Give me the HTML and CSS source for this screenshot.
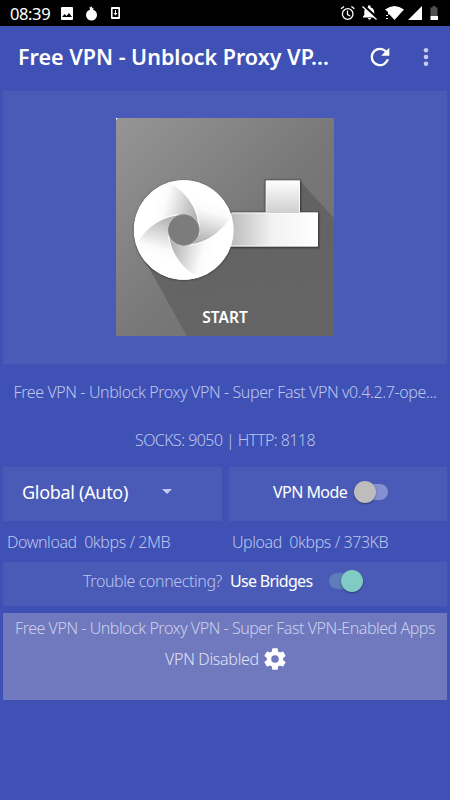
FILE: index.html
```html
<!DOCTYPE html>
<html lang="en">
<head>
<meta charset="utf-8">
<title>Free VPN</title>
<link rel="stylesheet" href="styles.css">
</head>
<body>
<header class="status">
  <span class="clock">08:39</span>
  <svg class="status-left" width="62" height="26" viewBox="59 0 62 26" fill="#fff">
    <path fill-rule="evenodd" d="M62 7h10q1 0 1 1v11q0 1-1 1H62q-1 0-1-1V8q0-1 1-1zm0 10h10l-3-4-2.500 3-1.800-2z"/>
    <circle cx="91.500" cy="15" r="5.500"/><path d="M90 11l-.5-4.500 1.500 1 .5-1.500 1 2.500 1-1-.5 4z"/>
    <path fill-rule="evenodd" d="M112 7h7q1 0 1 1v10q0 1-1 1h-7q-1 0-1-1V8q0-1 1-1zm.6 2v8h5.800V9z"/><path d="M115 10h1v3h1.500l-2 2.500-2-2.500h1.500z"/>
  </svg>
  <svg class="status-right" width="102" height="26" viewBox="339 0 102 26" fill="#fff">
    <g fill="none" stroke="#fff" stroke-width="1.300"><circle cx="347.700" cy="14" r="5.300"/><path d="M347.500 10.500v4l2.700 1.500M341 8.800l3-2.400M354.400 8.800l-3-2.400"/></g>
    <path d="M363 17.500v-1l1.300-1.500V11q.3-3 3.700-3.800V5.500h2.500v1.700q3 .8 3.700 3.800v4l1.500 1.500v1zM368 18h3q-.2 1.800-1.500 1.800T368 18z"/><path d="M363 5l14 13" stroke="#000" stroke-width="2.500"/><path d="M362.500 6.500l14 13" stroke="#fff" stroke-width="1.200"/>
    <path d="M385 9.500q9.500-7 19 0L394.500 20l-5-5.500h-1.500V12z"/><path d="M386 15h2v1h-2zm0 3h2v1h-2z"/>
    <path d="M422 6v14h-14z"/>
    <path fill="#505050" d="M432.500 6h3v1.500h2V16h-7V7.500h2z"/><path d="M430.500 16h7.500v4h-7.500z"/>
  </svg>
</header>
<div class="toolbar">
  <h1>Free VPN - Unblock Proxy VP...</h1>
  <svg class="refresh" width="28" height="28" viewBox="0 0 24 24"><path fill="#fff" d="M17.650 6.350A7.960 7.960 0 0 0 12 4a8 8 0 1 0 7.730 10h-2.080A6 6 0 1 1 12 6c1.660 0 3.140.69 4.220 1.780L13 11h7V4z"/></svg>
  <svg class="more" width="6" height="20" viewBox="0 0 6 20" fill="#c5caee"><circle cx="3" cy="3.300" r="2.300"/><circle cx="3" cy="10" r="2.300"/><circle cx="3" cy="16.700" r="2.300"/></svg>
</div>
<main>
  <section class="panel hero">
    <div class="start">
      <svg width="218" height="218" viewBox="0 0 218 218">
        <defs>
          <linearGradient id="bg" x2="1" y2="1"><stop stop-color="#959595"/><stop offset=".55" stop-color="#777"/><stop offset="1" stop-color="#707070"/></linearGradient>
          <linearGradient id="shade" x2=".7" y2="1"><stop offset=".3" stop-color="#505050" stop-opacity=".55"/><stop offset="1" stop-color="#555" stop-opacity=".45"/></linearGradient>
          <linearGradient id="bar"><stop stop-color="#b5b5b5"/><stop offset=".5" stop-color="#f2f2f2"/><stop offset="1" stop-color="#fff"/></linearGradient>
          <linearGradient id="block" x2="0" y2="1"><stop stop-color="#fff"/><stop offset="1" stop-color="#cecece"/></linearGradient>
          <linearGradient id="blade" gradientUnits="userSpaceOnUse" x1="30" y1="-28" x2="19" y2="13"><stop stop-color="#fff"/><stop offset=".25" stop-color="#fbfbfb"/><stop offset="1" stop-color="#b2b2b2"/></linearGradient>
          <filter id="soft" x="-20%" y="-20%" width="140%" height="140%"><feGaussianBlur stdDeviation="1.200"/></filter>
          <path id="petal" d="M-14-47.500A49.500 49.500 0 0 1 47.500-14C38 4 17 18-5 15A16 16 0 0 0 15 5C18-17 4-38-14-47.500Z"/>
        </defs>
        <rect width="218" height="218" fill="url(#bg)"/>
        <path d="M0 0h2L0 2z" fill="#fff"/>
        <path d="M29 143L71 218H218V100L184 63V94H202V128H110Q100 161 68 162Q43 162 29 143Z" fill="url(#shade)"/>
        <g fill="#333" filter="url(#soft)"><circle cx="67.700" cy="112.700" r="49.500"/><path d="M110 94h93v36h-93zM149 62h36v33h-36z"/></g>
        <path d="M110 94.500h92v34h-92z" fill="url(#bar)"/>
        <path d="M150 62.500h34v32h-34z" fill="url(#block)"/>
        <path d="M150 94.500V63h33.500v31.500M202 95H116M201.500 95v33H112" fill="none" stroke="#fff" stroke-opacity=".8"/>
        <g transform="translate(67.700 112)">
          <circle r="49.500" fill="#fff"/>
          <g fill="url(#blade)" stroke="#fff" stroke-width=".9"><use href="#petal"/><use href="#petal" transform="rotate(90)"/><use href="#petal" transform="rotate(180)"/><use href="#petal" transform="rotate(270)"/></g>
          <circle r="15.700" fill="#7c7c7c" stroke="#999" stroke-width=".6"/>
        </g>
      </svg>
      <span class="start-label">START</span>
    </div>
  </section>
  <p class="version"><span>Free VPN - Unblock Proxy VPN - Super Fast VPN v0.4.2.7-ope...</span></p>
  <p class="ports"><span>SOCKS: 9050 | HTTP: 8118</span></p>
  <div class="controls">
    <div class="panel country"><span class="global">Global (Auto)</span><i class="caret"></i></div>
    <div class="panel mode"><span class="vpnmode">VPN Mode</span><div class="switch off"><i></i></div></div>
  </div>
  <div class="traffic"><p><span class="down">Download&nbsp; 0kbps / 2MB</span></p><p><span class="up">Upload&nbsp; 0kbps / 373KB</span></p></div>
  <div class="panel bridges"><span class="trouble">Trouble connecting?</span><span class="use">Use Bridges</span><div class="switch on"><i></i></div></div>
  <section class="apps">
    <p><span class="apps-title">Free VPN - Unblock Proxy VPN - Super Fast VPN-Enabled Apps</span></p>
    <div class="disabled"><span class="vpndis">VPN Disabled</span>
      <svg width="26" height="26" viewBox="0 0 24 24"><path fill="#fff" d="M19.430 12.980c.04-.32.07-.64.07-.98s-.03-.66-.07-.98l2.110-1.650c.19-.15.24-.42.12-.64l-2-3.460c-.12-.22-.39-.3-.61-.22l-2.490 1c-.52-.4-1.080-.73-1.690-.98l-.38-2.650C14.460 2.180 14.250 2 14 2h-4c-.25 0-.46.18-.49.42l-.38 2.650c-.61.25-1.170.59-1.690.98l-2.490-1c-.23-.09-.49 0-.61.22l-2 3.460c-.13.22-.07.49.12.64l2.110 1.650c-.04.32-.07.65-.07.98s.03.66.07.98l-2.110 1.650c-.19.15-.24.42-.12.64l2 3.460c.12.22.39.3.61.22l2.490-1c.52.4 1.080.73 1.690.98l.38 2.650c.03.24.24.42.49.42h4c.25 0 .46-.18.49-.42l.38-2.650c.61-.25 1.170-.59 1.690-.98l2.490 1c.23.09.49 0 .61-.22l2-3.460c.12-.22.07-.49-.12-.64l-2.110-1.650zM12 15.500A3.500 3.500 0 1 1 12 8.500a3.500 3.500 0 0 1 0 7z"/></svg>
    </div>
  </section>
</main>
</body>
</html>
```
FILE: styles.css
```css
* { box-sizing: border-box; }
body { margin: 0; width: 450px; height: 800px; overflow: hidden; background: #3f51b5; color: #fff; font-family: "Noto Sans", sans-serif; font-size: 16px; font-weight: 300; }
p, h1 { margin: 0; white-space: nowrap; }
span { white-space: nowrap; }
.status { height: 26px; background: #000; display: flex; align-items: center; padding: 0 9px 0 10px; }
.clock { font-size: 16.500px; font-weight: 400; width: 49px; line-height: 26px; letter-spacing: -.4px; padding-top: 2px; }
.status-right { margin-left: auto; }
.toolbar { height: 65px; display: flex; align-items: center; padding: 0 21px 4px 18px; }
h1 { font-size: 21.500px; font-weight: 600; width: 310px; letter-spacing: 0; line-height: 30px; }
.refresh { margin-left: 38px; }
.more { margin-left: auto; }
main { padding: 0 3px; }
.panel { background: #4a5bb7; }
.hero { height: 273px; display: flex; justify-content: center; padding-top: 27px; }
.start { position: relative; width: 218px; height: 218px; }
.start svg { display: block; }
.start-label { position: absolute; left: 0; right: 0; bottom: 8px; text-align: center; font-weight: 600; font-size: 15.500px; line-height: 22px; }
.version, .ports, .traffic, .trouble, .apps-title { color: #bcc5ee; }
.version { height: 56px; line-height: 56px; text-align: center; letter-spacing: -.4px; }
.ports { height: 47px; line-height: 40px; text-align: center; letter-spacing: -.57px; }
.controls { display: grid; grid-template-columns: 219px 218px; justify-content: space-between; height: 54px; }
.country, .mode { display: flex; align-items: center; }
.country { padding: 0 0 5px 19px; }
.global { font-size: 18px; font-weight: 400; width: 140px; letter-spacing: -.3px; }
.caret { border: 5.500px solid transparent; border-top-color: #c5caee; border-bottom: 0; }
.mode { padding: 0 0 4px 44px; font-weight: 400; }
.vpnmode { width: 81px; letter-spacing: -.55px; }
.switch { width: 34px; height: 22px; display: flex; align-items: center; }
.switch i { width: 22px; height: 22px; border-radius: 50%; box-shadow: 0 1px 2px #0006; }
.switch::before { content: ""; width: 31px; height: 16px; border-radius: 8px; flex: none; }
.off::before { background: #8490d1; margin-left: 3px; }
.off i { background: #bdbdbd; margin-left: -34px; flex: none; }
.on::before { background: #5c7cba; }
.on i { background: #80cbc4; margin-left: -19px; flex: none; }
.traffic { display: grid; grid-template-columns: 225px 1fr; padding-left: 4px; height: 41px; line-height: 42px; letter-spacing: -.43px; }
.bridges { height: 44px; display: flex; align-items: center; padding: 0 0 6px 80px; }
.trouble { width: 147px; letter-spacing: -.4px; }
.use { font-weight: 400; width: 99px; letter-spacing: -.7px; }
.apps { margin-top: 7px; height: 87px; background: #7079bd; text-align: center; line-height: 30px; }
.apps-title { color: #cbd0ed; letter-spacing: -.47px; }
.disabled { display: flex; align-items: center; padding-left: 162px; height: 32px; color: #dfe2f5; }
.vpndis { width: 97px; text-align: left; letter-spacing: -.3px; }
```
